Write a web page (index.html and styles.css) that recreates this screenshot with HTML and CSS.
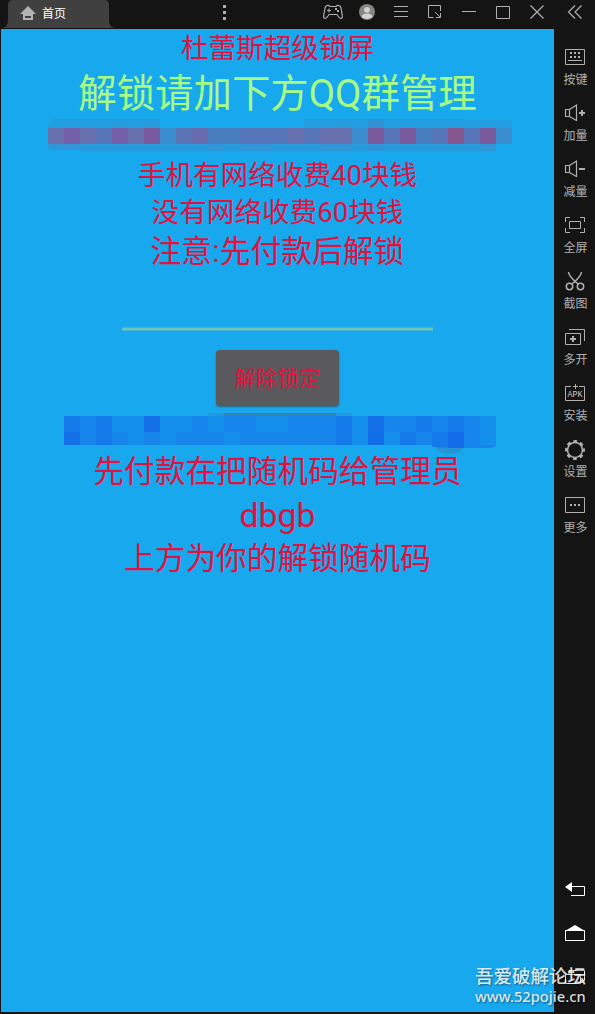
FILE: index.html
```html
<!DOCTYPE html>
<html lang="zh-CN">
<head>
<meta charset="utf-8">
<title>首页</title>
<link rel="stylesheet" href="styles.css">
</head>
<body>
<div class="window">
  <div class="main">
    <header class="titlebar">
      <svg class="tab-shape" width="115" height="28"><path d="M2 28Q8 27 8 20V5Q8 0 13 0H104Q109 0 109 5V20Q109 27 115 28Z" fill="#404040"/></svg>
      <div class="tab">
        <svg width="16" height="14" viewBox="0 0 16 14"><path fill="#b4b4b4" fill-rule="evenodd" d="M8 0L16 8H13V14H3V8H0ZM5 10V12H11V10Z"/></svg>
        <span>首页</span>
      </div>
      <svg class="dots" width="3" height="15" fill="#b0b0b0"><path d="M0 0h3v3H0zM0 6h3v3H0zM0 12h3v3H0z"/></svg>
      <svg class="tools" width="232" height="28" viewBox="322 0 232 28" fill="none" stroke="#b0b0b0">
        <path stroke-width="1.2" d="M327 5.5Q329 5 330 6.5H336Q337 5 339 5.5Q340.500 6 341 8L342.300 15.500Q342.500 18.500 341 18.500Q339.500 18.500 337 14.500H329Q326.500 18.500 325 18.500Q323.500 18.500 323.700 15.500L325 8Q325.500 6 327 5.500Z"/>
        <path d="M327 10.500h4M329 8.500v4"/><path stroke="none" fill="#b0b0b0" d="M335 8h2v2h-2zM337 10h2v2h-2z"/>
        <circle cx="367" cy="12" r="8" fill="#858782" stroke="none"/>
        <circle cx="367" cy="9.800" r="2.900" fill="#d2d2d2" stroke="none"/><path d="M361.500 17Q362 13.500 367 13.500T372.500 17Q367 21 361.500 17Z" fill="#d2d2d2" stroke="none"/>
        <path d="M394 6.500h14M394 11.500h14M394 16.500h14"/>
        <path d="M433.500 17.500H428.500V5.500H440.500V11M435 12L440 17M440.500 13V17.500H436"/>
        <path d="M462 11.500h14"/>
        <path d="M496.500 6.500h13v12h-13z"/>
        <path d="M530.500 5.500L543.500 18.500M543.500 5.500L530.500 18.500" stroke-width="1.200"/>
      </svg>
    </header>
    <main class="screen">
      <p class="line title">杜蕾斯超级锁屏</p>
      <p class="line notice">解锁请加下方QQ群管理</p>
      <svg class="mosaic-a" width="464" height="32" viewBox="48 119 464 32" shape-rendering="crispEdges">
        <path fill="#229fe2" d="M52 119H160V128H48V123ZM304 119H464V128H304ZM464 120H512V128H464Z"/>
        <path fill="#289bdd" d="M112 119h16v9h-16zM144 119h16v9h-16zM336 119h16v9h-16z"/>
        <path fill="#3295d7" d="M48 144H80V150H52L48 147ZM208 144h16v7h-16zM240 144h32v7h-32zM320 144h32v7h-32zM480 144h16v8h-16z"/>
        <path fill="#289bdd" d="M80 144H208V151H80ZM224 144h16v7h-16zM272 144h48v7h-48zM352 144h16v7h-16zM384 144h96v7h-96z"/>
        <path fill="#398bcc" d="M368 119h16v9h-16zM368 144h16v7h-16z" opacity=".65"/>
        <path fill="#6870b0" d="M48 128H160V144H48ZM208 128H368V144H208Z"/>
        <path fill="#5575b8" d="M96 128h16v16H96zM240 128h48v16h-48zM304 128h16v16h-16zM384 128h16v16h-16zM432 128h16v16h-16zM464 128h16v16h-16z"/>
        <path fill="#735faa" d="M64 128h16v16H64zM112 128h16v16h-16z"/>
        <path fill="#795a9f" d="M144 128h16v16h-16zM368 128h16v16h-16zM400 128h16v16h-16zM480 128h16v16h-16z"/>
        <path fill="#865690" d="M448 128h16v16h-16z"/>
        <path fill="#3a8dce" d="M160 128h16v16h-16zM352 128h16v16h-16zM496 128h16v16h-16z"/>
        <path fill="#5a73b5" d="M176 128h16v16h-16z"/><path fill="#686bad" d="M192 128h16v16h-16z"/>
        <path fill="#487ec0" d="M208 128h32v16h-32zM416 128h16v16h-16z"/>
      </svg>
      <p class="line price">手机有网络收费40块钱</p>
      <p class="line price offline">没有网络收费60块钱</p>
      <p class="line warn">注意:先付款后解锁</p>
      <div class="input-line"></div>
      <button class="unlock">解除锁定</button>
      <svg class="mosaic-b" width="432" height="42" viewBox="64 413 432 42" shape-rendering="crispEdges">
        <path fill="#229bdc" d="M208 413h144v3H208z"/><path fill="#3484b3" d="M224 413h112v3H224z"/>
        <path fill="#2494d5" d="M435 447H464Q462 454 449 454Q440 454 435 447Z"/>
        <path fill="#1686ec" d="M64 416H496V446L490 448H437L433 445H64Z"/>
        <path fill="#147ae9" d="M64 416h16v16H64zM96 416h16v16H96zM96 432h16v13H96zM336 416h16v29h-16zM416 416h16v16h-16zM400 432h16v13h-16zM448 416h16v16h-16zM432 432h16v15h-16z"/>
        <path fill="#156fe9" d="M64 432h16v13H64zM144 416h16v16h-16zM368 416h16v16h-16z"/>
        <path fill="#126deb" d="M368 432h16v13h-16zM448 432h16v16h-16z"/>
        <path fill="#158fec" d="M112 416h32v16h-32zM128 432h16v13h-16zM160 416h32v16h-32zM160 432h16v13h-16zM208 416h16v16h-16zM224 432h16v13h-16zM256 416h32v16h-32zM352 416h16v29h-16zM384 432h16v13h-16zM480 416h16v29h-16z"/>
      </svg>
      <p class="line pay">先付款在把随机码给管理员</p>
      <p class="line code">dbgb</p>
      <p class="line hint">上方为你的解锁随机码</p>
    </main>
  </div>
  <aside class="sidebar">
    <svg class="collapse" width="16" height="14" fill="none" stroke="#b0b0b0"><path d="M8 .5L1.500 7L8 13.500M14.500 .5L8 7L14.500 13.500" stroke-width="1.200"/></svg>
    <nav class="actions">
      <div class="action"><svg class="icon"><path d="M1.500 3.500h19v15h-19zM4 14.500h14"/><path class="solid" d="M6 6h2v2H6zM10 6h2v2h-2zM14 6h2v2h-2zM6 10h2v2H6zM10 10h2v2h-2zM14 10h2v2h-2z"/></svg><span>按键</span></div>
      <div class="action"><svg class="icon"><path stroke-width="1.200" d="M1.500 7.500h4v7h-4zM5.500 7.500L12.500 3V18.500L5.500 14.500"/><path stroke-width="2" d="M15 11h6M18 8v6"/></svg><span>加量</span></div>
      <div class="action"><svg class="icon"><path stroke-width="1.200" d="M1.500 7.500h4v7h-4zM5.500 7.500L12.500 3V18.500L5.500 14.500"/><path stroke-width="2" d="M15 11h6"/></svg><span>减量</span></div>
      <div class="action"><svg class="icon"><path d="M5.500 7.500h11v7h-11zM1.500 8V3.500H6M16 3.500h4.500V8M20.500 14v4.500H16M6 18.500H1.500V14"/></svg><span>全屏</span></div>
      <div class="action"><svg class="icon"><g stroke-width="1.500"><circle cx="5.500" cy="16.500" r="3.200"/><circle cx="16.500" cy="16.500" r="3.200"/><path d="M4.500 2Q4.500 6 14 14M17.500 2Q17.500 6 8 14"/></g></svg><span>截图</span></div>
      <div class="action"><svg class="icon"><path d="M1.500 7.500h15v11h-15zM5 3.500h15.500V15"/><path stroke-width="2" d="M6 13h6M9 10v6"/></svg><span>多开</span></div>
      <div class="action"><svg class="icon"><path d="M7 4.500H1.500v14h19v-14H15M11.500 2v5M9 4.500h5"/><text class="apk" x="3.500" y="15">APK</text></svg><span>安装</span></div>
      <div class="action"><svg class="icon"><circle cx="11" cy="12" r="7.500" stroke-width="1.500"/><circle cx="11" cy="12" r="8.600" stroke-width="2.700" stroke-dasharray="3.600 3.154" stroke-dashoffset="1.800"/></svg><span>设置</span></div>
      <div class="action"><svg class="icon"><path d="M1.500 3.500h19v15h-19z"/><path class="solid" d="M6 10h2v2H6zM10 10h2v2h-2zM14 10h2v2h-2z"/></svg><span>更多</span></div>
    </nav>
    <div class="navigation">
      <svg width="20" height="16"><path class="white" d="M7 1L0 6L7 11z"/><path class="outline" d="M6 5.500H19.500V14.500H6"/></svg>
      <svg width="20" height="16"><path class="white" d="M0 6L10 0L20 6z"/><path class="outline" d="M.5 5.500h19v10H.5z"/></svg>
      <svg width="20" height="16"><path class="outline" d="M.5 5.500h15v9H.5zM4 5V1.500h15.500V11.500H16"/></svg>
    </div>
  </aside>
  <div class="watermark"><span class="forum">吾爱破解论坛</span><span class="site">www.52pojie.cn</span></div>
</div>
</body>
</html>
```
FILE: styles.css
```css
* { box-sizing: border-box; }
body { margin: 0; background: #141414; }
.window { position: relative; display: flex; width: 595px; height: 1014px; overflow: hidden; background: #141414; font-family: Roboto, "Noto Sans CJK SC", sans-serif; }
.window svg { display: block; flex-shrink: 0; }
.main { width: 554px; display: flex; flex-direction: column; padding: 0 0 2px 1px; }
.titlebar { position: relative; height: 29px; display: flex; align-items: flex-start; }
.tab-shape { position: absolute; left: -1px; top: 0; }
.tab { position: relative; width: 222px; display: flex; gap: 6px; padding: 6px 0 0 19px; }
.tab span { color: #fff; font-size: 12px; line-height: 16px; }
.dots { margin-top: 5px; }
.tools { margin-left: auto; }
.screen { flex: 1; background: #18a8ee; display: flex; flex-direction: column; align-items: center; color: #e01240; }
.line { margin: 0; white-space: nowrap; flex-shrink: 0; }
.title { height: 41px; font-size: 27.6px; line-height: 40px; }
.notice { height: 49px; font-size: 38.4px; line-height: 47px; color: #a8fc84; }
.mosaic-a { align-self: stretch; margin-left: 47px; }
.price { margin-top: 6px; height: 38px; font-size: 27.6px; line-height: 38px; }
.offline { margin-top: 0; height: 36px; line-height: 36px; }
.warn { height: 42px; font-size: 30.8px; line-height: 42px; }
.input-line { width: 311px; height: 4px; margin: 54px 1px 0 0; border-radius: 1px; background: #70c4bd; border: solid #43b5d4; border-width: 1px 0; }
.unlock { width: 123px; height: 56px; margin: 19px 0 0; padding: 0; border: 0; border-radius: 4px; background: #5a595b; box-shadow: 0 1px 2px #31617d; color: #e01240; font: 21.5px/57px Roboto, "Noto Sans CJK SC", sans-serif; flex-shrink: 0; }
.mosaic-b { margin: 7px 0 0 5px; }
.pay { height: 35px; margin-top: -1px; font-size: 30.7px; line-height: 36px; }
.code { height: 50px; font-size: 33.8px; line-height: 54px; }
.hint { height: 40px; font-size: 30.7px; line-height: 40px; }
.sidebar { width: 41px; padding: 5px 0 0 1px; display: flex; flex-direction: column; align-items: center; }
.collapse { margin-bottom: 27px; }
.actions { display: grid; grid-auto-rows: 56px; margin-left: 1px; }
.action { display: flex; flex-direction: column; align-items: center; gap: 4px; color: #b0b0b0; font-size: 12px; line-height: 17px; }
.icon { width: 22px; height: 22px; fill: none; stroke: #b0b0b0; stroke-width: 1; }
.solid { fill: #b0b0b0; stroke: none; }
.apk { fill: #c8c8c8; stroke: none; font: 8.3px "Liberation Mono", monospace; }
.navigation { display: flex; flex-direction: column; gap: 28px; margin: 331px 0 0; }
.white { fill: #fff; }
.outline { fill: none; stroke: #fff; }
.watermark { position: absolute; left: 475px; top: 966px; display: flex; flex-direction: column; color: rgba(255,255,255,.85); text-shadow: 1px 1px 2px rgba(0,0,0,.45); white-space: nowrap; }
.forum { font-size: 18.5px; line-height: 23px; font-weight: 500; }
.site { margin-top: -1px; font: 500 14.7px/17px "Noto Sans", sans-serif; }
```
